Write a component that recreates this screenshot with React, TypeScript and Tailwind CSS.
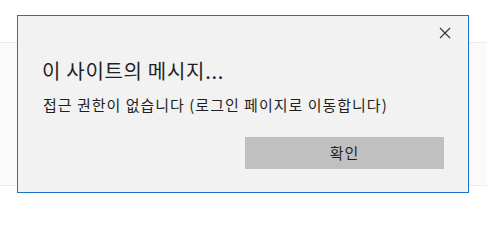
import React from "react";

export default function App() {
  return (
    <div
      className="relative w-[487px] h-[211px] bg-white overflow-hidden"
      style={{ fontFamily: '"Noto Sans CJK KR", "Noto Sans", sans-serif' }}
    >
      <div className="h-[42px]" />
      <div className="h-[144px] bg-[#fafafa] border-y border-[#ebebeb]" />
      <div className="absolute left-[17px] top-[15px] w-[452px] h-[178px] bg-[#f2f2f2] border border-[#1a73c8] flex flex-col">
        <div className="flex justify-end h-[34px] pr-[17px] pt-[10px]">
          <svg width="12" height="12" viewBox="0 0 12 12" className="mt-[1px]">
            <path d="M1 1 L11 11 M11 1 L1 11" stroke="#333" strokeWidth="1.1" />
          </svg>
        </div>
        <div className="pl-[24px] text-[20px] leading-[24px] tracking-[0.7px] text-[#1f1f1f] mt-[9px]">
          이 사이트의 메시지...
        </div>
        <div className="pl-[25px] text-[15px] leading-[20px] tracking-[1px] text-[#1f1f1f] mt-[12px]">
          접근 권한이 없습니다 (로그인 페이지로 이동합니다)
        </div>
        <div className="flex justify-end pr-[24px] mt-[22px]">
          <div className="w-[199px] h-[32px] bg-[#c0c0c0] flex items-center justify-center text-[15px] tracking-[1px] text-[#1f1f1f]">
            확인
          </div>
        </div>
      </div>
    </div>
  );
}
